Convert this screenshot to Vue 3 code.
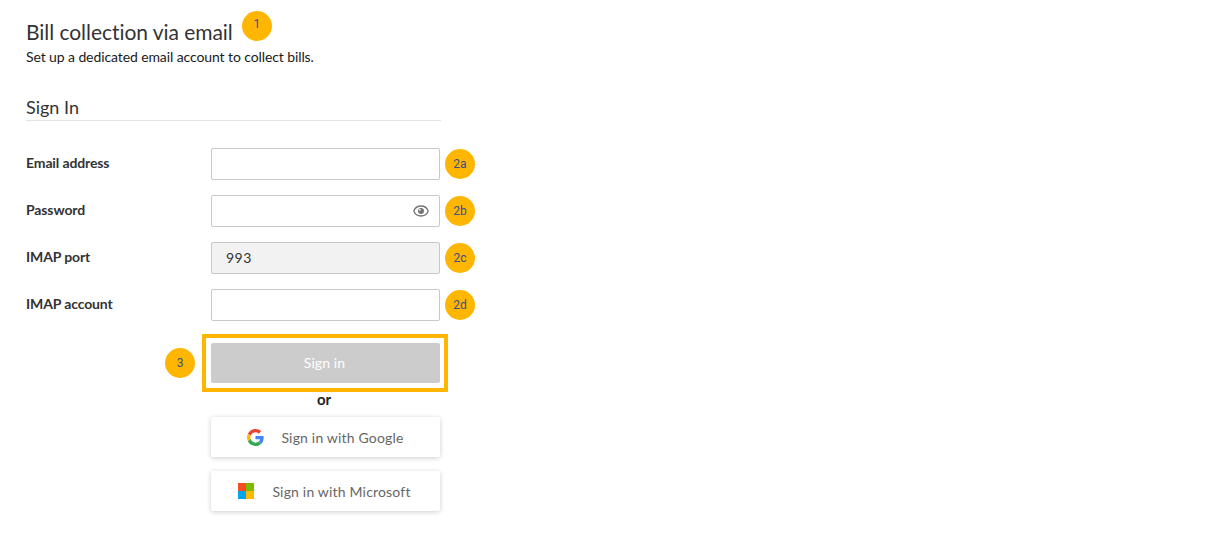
<script setup>
const fields = [
  { label: 'Email address', badge: '2a', value: '' },
  { label: 'Password', badge: '2b', value: '', eye: true },
  { label: 'IMAP port', badge: '2c', value: '993', disabled: true },
  { label: 'IMAP account', badge: '2d', value: '' },
]
</script>

<template>
  <div class="page">
    <div class="title-row">
      <h1 class="title">Bill collection via email</h1>
      <span class="badge title-badge">1</span>
    </div>
    <p class="subtitle">Set up a dedicated email account to collect bills.</p>

    <h2 class="section">Sign In</h2>

    <div class="form">
      <div v-for="f in fields" :key="f.label" class="row">
        <label class="label">{{ f.label }}</label>
        <div class="field" :class="{ disabled: f.disabled }">
          <span class="value">{{ f.value }}</span>
          <svg v-if="f.eye" class="eye" viewBox="0 0 16 12" width="16" height="12">
            <path d="M8 1C4.6 1 1.9 3 .8 6c1.1 3 3.8 5 7.2 5s6.100-2 7.200-5C14.100 3 11.400 1 8 1z" fill="none" stroke="#757575" stroke-width="1.300" />
            <circle cx="8" cy="6" r="3" fill="#757575" />
            <circle cx="6.800" cy="4.800" r="0.900" fill="#fff" />
          </svg>
        </div>
        <span class="badge">{{ f.badge }}</span>
      </div>
    </div>

    <div class="actions">
      <div class="highlight">
        <span class="badge step-badge">3</span>
        <button class="signin" type="button">Sign in</button>
      </div>
      <div class="or">or</div>
      <button class="social google" type="button">
        <svg viewBox="0 0 48 48" width="17" height="17">
          <path fill="#EA4335" d="M24 9.500c3.540 0 6.710 1.220 9.210 3.600l6.850-6.850C35.900 2.380 30.470 0 24 0 14.620 0 6.510 5.380 2.560 13.220l7.980 6.190C12.430 13.720 17.740 9.500 24 9.500z" />
          <path fill="#4285F4" d="M46.980 24.550c0-1.570-.15-3.090-.38-4.550H24v9.020h12.940c-.58 2.960-2.260 5.480-4.780 7.180l7.730 6c4.510-4.180 7.090-10.360 7.090-17.650z" />
          <path fill="#FBBC05" d="M10.530 28.590c-.48-1.450-.76-2.990-.76-4.590s.27-3.140.76-4.590l-7.980-6.190C.92 16.460 0 20.120 0 24c0 3.880.92 7.540 2.560 10.780l7.970-6.190z" />
          <path fill="#34A853" d="M24 48c6.480 0 11.930-2.130 15.890-5.810l-7.730-6c-2.150 1.450-4.920 2.300-8.160 2.300-6.260 0-11.570-4.220-13.470-9.910l-7.980 6.190C6.510 42.620 14.620 48 24 48z" />
        </svg>
        <span>Sign in with Google</span>
      </button>
      <button class="social microsoft" type="button">
        <svg viewBox="0 0 16 16" width="16" height="16">
          <rect x="0" y="0" width="8" height="8" fill="#F25022" />
          <rect x="8" y="0" width="8" height="8" fill="#7FBA00" />
          <rect x="0" y="8" width="8" height="8" fill="#00A4EF" />
          <rect x="8" y="8" width="8" height="8" fill="#FFB900" />
        </svg>
        <span>Sign in with Microsoft</span>
      </button>
    </div>
  </div>
</template>

<style scoped>
.page {
  width: 1210px;
  height: 541px;
  box-sizing: border-box;
  padding: 11px 0 0 26px;
  background: #fff;
  font-family: Lato, sans-serif;
  font-variant-ligatures: none;
  color: #1a1a1a;
  overflow: hidden;
}

.title-row {
  display: flex;
  align-items: flex-start;
  height: 30px;
}

.title {
  margin: 8px 0 0;
  font-size: 21px;
  font-weight: 400;
  line-height: 26px;
  letter-spacing: -0.05px;
  color: #333;
}

.title-badge {
  margin-left: 8px;
  font-size: 11px;
  padding-bottom: 4px;
  box-sizing: border-box;
}

.subtitle {
  margin: 7px 0 0;
  font-size: 14px;
  line-height: 17px;
  letter-spacing: -0.1px;
}

.section {
  width: 415px;
  margin: 31px 0 0;
  padding-bottom: 2px;
  border-bottom: 1px solid #e3e3e3;
  font-size: 18px;
  font-weight: 400;
  line-height: 22px;
  color: #333;
}

.form {
  margin-top: 27px;
  display: flex;
  flex-direction: column;
  gap: 15px;
}

.row {
  display: flex;
  align-items: center;
}

.label {
  width: 185px;
  padding-bottom: 4px;
  font-size: 14px;
  font-weight: 700;
  letter-spacing: -0.12px;
  color: #333;
}

.field {
  width: 229px;
  height: 32px;
  box-sizing: border-box;
  display: flex;
  align-items: center;
  justify-content: space-between;
  padding: 0 10px 0 14px;
  border: 1px solid #c8c8c8;
  border-radius: 2px;
  background: #fff;
  font-size: 14px;
  color: #333;
}

.field.disabled {
  background: #f2f2f2;
}

.value {
  letter-spacing: 0.5px;
  margin-bottom: 1px;
}

.badge {
  flex: none;
  width: 30px;
  height: 30px;
  margin-left: 5px;
  border-radius: 50%;
  background: #ffb600;
  color: #3a4f85;
  display: flex;
  align-items: center;
  justify-content: center;
  font-family: Roboto, sans-serif;
  font-size: 12px;
  font-weight: 400;
}

.title-row .title-badge {
  margin-left: 9px;
}

.actions {
  margin-left: 176px;
  margin-top: 13px;
  width: 246px;
}

.highlight {
  position: relative;
  box-sizing: border-box;
  width: 246px;
  height: 58px;
  padding: 5px 4px 5px 5px;
  border: 4px solid #ffb600;
}

.step-badge {
  position: absolute;
  left: -41px;
  top: 10px;
  margin: 0;
}

.signin {
  display: block;
  width: 229px;
  height: 40px;
  padding: 0 2px 2px 0;
  border: 0;
  border-radius: 2px;
  background: #cccccc;
  color: #fff;
  font-family: Lato, sans-serif;
  font-size: 14px;
  letter-spacing: 0.1px;
}

.or {
  width: 246px;
  height: 25px;
  margin-left: -1px;
  text-align: center;
  font-size: 15px;
  font-weight: 700;
  line-height: 15px;
  color: #222;
}

.social {
  display: flex;
  align-items: center;
  justify-content: center;
  width: 229px;
  height: 40px;
  padding: 0;
  margin-left: 9px;
  border: 0;
  border-radius: 2px;
  background: #fff;
  box-shadow: 0 1px 5px rgba(0, 0, 0, 0.2);
  color: #666;
  font-family: Lato, sans-serif;
  font-size: 14px;
  letter-spacing: 0.18px;
}

.google svg {
  margin-right: 17px;
}

.microsoft {
  margin-top: 14px;
  padding-right: 2px;
}

.microsoft svg {
  margin-right: 18px;
}
</style>
